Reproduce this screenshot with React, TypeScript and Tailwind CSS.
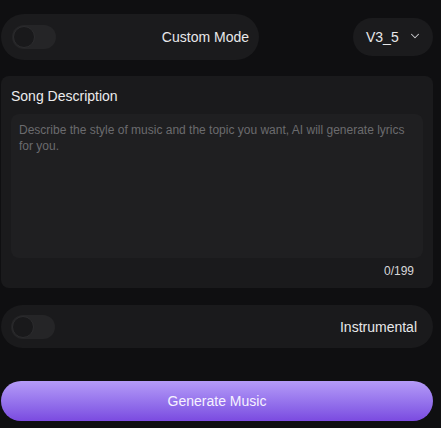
import { ChevronDown } from "lucide-react";

const Toggle = () => (
  <div className="flex h-6 w-11 shrink-0 items-center rounded-full bg-[#252527] px-px">
    <div className="size-[22px] rounded-full border border-[#2c2c2e] bg-[#19191b]" />
  </div>
);

export default function App() {
  return (
    <div className="min-h-[428px] bg-[#0f0f11] pt-[14px] font-['Liberation_Sans',Arial,sans-serif] text-sm">
      <div className="ml-px flex w-[432px] flex-col">
        <div className="flex items-center justify-between">
          <div className="flex h-[46px] w-[258px] items-center justify-between rounded-full bg-[#1b1b1d] pl-[11px] pr-[10px]">
            <Toggle />
            <span className="text-[#e8e8ea]">Custom Mode</span>
          </div>
          <button className="flex h-[38px] w-20 items-center gap-[9px] rounded-full bg-[#1b1b1d] pl-[13px] text-[#e8e8ea]">
            <span>V3_5</span>
            <ChevronDown className="size-3.5 -translate-y-px text-[#cfcfd2]" strokeWidth={1.75} />
          </button>
        </div>

        <div className="mt-4 flex flex-col rounded-lg bg-[#1a1a1c] px-[10px] pb-[9px] pt-[10px]">
          <label className="leading-5 text-[#ececee]">Song Description</label>
          <textarea
            className="mt-2 h-[144px] w-full resize-none rounded-lg bg-[#1f1f21] px-2 pt-2 text-xs leading-4 text-[#d0d0d2] outline-none placeholder:text-[#6b6b6e]"
            placeholder="Describe the style of music and the topic you want, AI will generate lyrics for you."
          />
          <div className="mt-[5px] pr-[9px] text-right text-xs leading-4 text-[#d6d6d8]">0/199</div>
        </div>

        <div className="mt-[17px] flex h-[43px] items-center justify-between rounded-full bg-[#1a1a1c] pl-[10px] pr-4">
          <Toggle />
          <span className="text-[#e8e8ea]">Instrumental</span>
        </div>

        <button className="mt-[33px] flex h-10 items-center justify-center rounded-full bg-gradient-to-b from-[#b59bf8] to-[#7b4ae0] text-[#f6f2ff]">
          Generate Music
        </button>
      </div>
    </div>
  );
}
